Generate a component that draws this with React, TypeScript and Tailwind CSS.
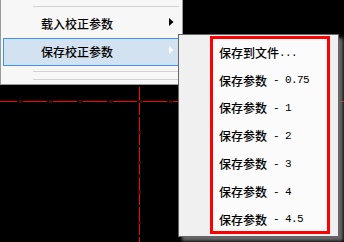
import React from "react";

const cjk = '"Noto Sans CJK SC", "Noto Sans", sans-serif';
const mono = '"Liberation Mono", monospace';

function Arrow({ light }: { light?: boolean }) {
  return (
    <svg width="5" height="8" viewBox="0 0 5 8" className="-mt-[4px]">
      <polygon points="0,0 4.5,4 0,8" fill={light ? "#ffffff" : "#000000"} />
    </svg>
  );
}

function Separator({ className }: { className: string }) {
  return <div className={`ml-[32px] mr-[3px] h-px bg-[#d2d2d2] ${className}`} />;
}

const saveItems: { cn: string; en: string }[] = [
  { cn: "保存到文件", en: "..." },
  { cn: "保存参数", en: " - 0.75" },
  { cn: "保存参数", en: " - 1" },
  { cn: "保存参数", en: " - 2" },
  { cn: "保存参数", en: " - 3" },
  { cn: "保存参数", en: " - 4" },
  { cn: "保存参数", en: " - 4.5" },
];

function Canvas() {
  // dash-dot centre lines drawn on the black viewport
  const hDots = [20, 50, 80, 110, 140, 170, 200, 230, 260, 290, 320];
  const vDots = [132, 162, 192, 222];
  return (
    <svg width="344" height="242" className="absolute left-0 top-0">
      <line x1="-7" y1="101.5" x2="344" y2="101.5" stroke="#ff0000" strokeWidth="1" strokeDasharray="24 6" />
      <line x1="139.5" y1="84" x2="139.5" y2="242" stroke="#ff0000" strokeWidth="1" strokeDasharray="28 2" strokeDashoffset="-3" />
      {hDots.map((x) => (
        <rect key={x} x={x - 1} y={100} width="3" height="3" fill="#4a0808" />
      ))}
      {vDots.map((y) => (
        <rect key={y} x={138} y={y - 1} width="3" height="3" fill="#4a0808" />
      ))}
    </svg>
  );
}

export default function App() {
  return (
    <div className="relative h-[242px] w-[344px] overflow-hidden bg-black" style={{ fontFamily: cjk }}>
      <Canvas />

      {/* parent menu, cut off at the top */}
      <div className="absolute left-0 top-0 flex h-[85px] w-[183px] flex-col border-b border-l border-r border-[#9a9a9a] bg-[#f7f7f7]">
        <Separator className="mt-[6px] mb-[3px]" />
        <div className="flex h-[28px] items-center justify-between pl-[40px] pr-[8px] text-[12px] font-medium text-black">
          <span>载入校正参数</span>
          <Arrow />
        </div>
        <div className="mx-[2px] flex h-[28px] items-center justify-between border border-[#3d93ee] bg-[#d3e2f1] pl-[37px] pr-[5px] text-[12px] font-medium text-black">
          <span>保存校正参数</span>
          <Arrow light />
        </div>
        <Separator className="mt-[5px]" />
        <Separator className="mt-[7px]" />
      </div>

      {/* submenu */}
      <div className="absolute left-[178px] top-[34px] flex h-[203px] w-[161px] border border-[#666666] bg-[#f0f0f0] pl-[31px] pt-px shadow-[4px_4px_3px_rgba(120,120,120,0.85)]">
        <div className="flex h-[198px] w-[120px] flex-col border-[3px] border-[#ff0000] bg-[#fbfbfb] pl-[6px]">
          {saveItems.map((it, i) => (
            <div key={i} className="flex h-[27.8px] shrink-0 items-center whitespace-pre text-[12px] font-medium text-black">
              <span>{it.cn}</span>
              <span className="text-[11px] font-normal tracking-[-0.6px]" style={{ fontFamily: mono }}>
                {it.en}
              </span>
            </div>
          ))}
        </div>
      </div>
    </div>
  );
}
